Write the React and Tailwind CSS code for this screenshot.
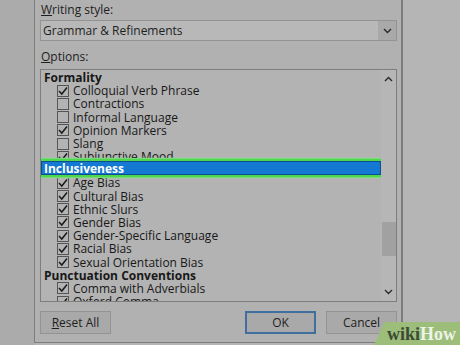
const font = { fontFamily: '"Open Sans", "Noto Sans", sans-serif' };

const rows = [
  { type: "head", label: "Formality" },
  { label: "Colloquial Verb Phrase", on: true },
  { label: "Contractions", on: false },
  { label: "Informal Language", on: false },
  { label: "Opinion Markers", on: true },
  { label: "Slang", on: false },
  { label: "Subjunctive Mood", on: true },
  { type: "selected", label: "Inclusiveness" },
  { label: "Age Bias", on: true },
  { label: "Cultural Bias", on: true },
  { label: "Ethnic Slurs", on: true },
  { label: "Gender Bias", on: true },
  { label: "Gender-Specific Language", on: true },
  { label: "Racial Bias", on: true },
  { label: "Sexual Orientation Bias", on: true },
  { type: "head", label: "Punctuation Conventions" },
  { label: "Comma with Adverbials", on: true },
  { label: "Oxford Comma", on: true },
];

function Chevron({ up }) {
  return (
    <svg width="9" height="6" viewBox="0 0 9 6" fill="none">
      <polyline
        points={up ? "1,5 4.5,1.5 8,5" : "1,1 4.5,4.5 8,1"}
        stroke="#2a2a2a"
        strokeWidth="1.4"
      />
    </svg>
  );
}

function Row({ row }) {
  if (row.type === "head") {
    return (
      <div className="h-[13.2px] flex items-center pl-[3px] font-bold text-[12px] text-[#181818] leading-[13px]">
        {row.label}
      </div>
    );
  }
  if (row.type === "selected") {
    // highlighted row with the green outline drawn round it
    return (
      <div className="relative z-10 -mt-[2px] mb-[1px] h-[14px] flex items-center pl-[2px] bg-[#1479d2] border border-[#0d4f8c] shadow-[0_0_0_2.5px_#4fd84f,0_0_1px_3px_#9be29b] font-bold text-[12px] text-white leading-[13px]">
        {row.label}
      </div>
    );
  }
  return (
    <div className="h-[13.2px] flex items-center gap-[4px] pl-[16px] text-[12px] text-[#181818] leading-[13px]">
      <span className="w-[12px] h-[12px] border border-[#555] flex items-center justify-center shrink-0">
        {row.on && (
          <svg width="10" height="10" viewBox="0 0 10 10" fill="none">
            <polyline points="1,5 3.8,8 9,1.5" stroke="#1a1a1a" strokeWidth="1.5" />
          </svg>
        )}
      </span>
      <span>{row.label}</span>
    </div>
  );
}

export default function App() {
  return (
    <div className="relative w-[460px] h-[345px] overflow-hidden flex bg-[#b5b5b5]" style={font}>
      <div className="w-[34px] bg-[#ababab]" />

      <div className="w-[369px] h-[343px] bg-[#b1b1b1] border-l border-r-2 border-b border-[#7c7c7c] pl-[5px] pr-[4px] flex flex-col">
        <div className="h-[20px] flex items-center pl-[1px] text-[12px] text-[#1e1e1e]">
          <span>
            <span className="underline">W</span>riting style:
          </span>
        </div>
        <div className="h-[21px] flex border border-[#939393] bg-[#b8b8b8]">
          <div className="flex-1 flex items-center pl-[2px] text-[12px] text-[#1e1e1e]">
            Grammar &amp; Refinements
          </div>
          <div className="w-[18px] bg-[#a9a9a9] flex items-center justify-center">
            <Chevron />
          </div>
        </div>
        <div className="h-[28px] flex items-end pb-[3px] pl-[1px] text-[12px] text-[#1e1e1e]">
          <span>
            <span className="underline">O</span>ptions:
          </span>
        </div>
        <div className="h-[233px] flex border border-[#7e7e7e] bg-[#b3b3b3]">
          <div className="flex-1 overflow-hidden pt-[1px]">
            {rows.map((r, i) => (
              <Row key={i} row={r} />
            ))}
          </div>
          <div className="w-[15px] bg-[#b6b6b6] flex flex-col items-center py-[6px]">
            <Chevron up />
            <div className="h-[140px]" />
            <div className="w-[14px] h-[34px] bg-[#a1a1a1]" />
            <div className="flex-1" />
            <Chevron />
          </div>
        </div>
        <div className="flex-1 flex items-center justify-between pt-[1px]">
          <button className="w-[71px] h-[23px] bg-[#a9a9a9] border border-[#939393] text-[12px] text-[#1e1e1e]">
            <span className="underline">R</span>eset All
          </button>
          <div className="flex gap-[10px]">
            <button className="w-[71px] h-[23px] bg-[#a9a9a9] border-2 border-[#3f6e9f] text-[12px] text-[#1e1e1e]">
              OK
            </button>
            <button className="w-[71px] h-[23px] bg-[#a9a9a9] border border-[#939393] text-[12px] text-[#1e1e1e]">
              Cancel
            </button>
          </div>
        </div>
      </div>

      <div className="flex-1" />

      <div className="absolute right-0 bottom-0 w-[86px] h-[23px] bg-[#9dbe7b] [clip-path:polygon(10px_0,100%_0,100%_100%,0_100%)] flex items-center justify-end pr-[4px]">
        <span className="text-[18px] font-bold leading-none" style={{ fontFamily: '"Liberation Serif", serif' }}>
          <span className="text-[#3b4a34]">wiki</span>
          <span className="text-[#eef3e8]">How</span>
        </span>
      </div>
    </div>
  );
}
